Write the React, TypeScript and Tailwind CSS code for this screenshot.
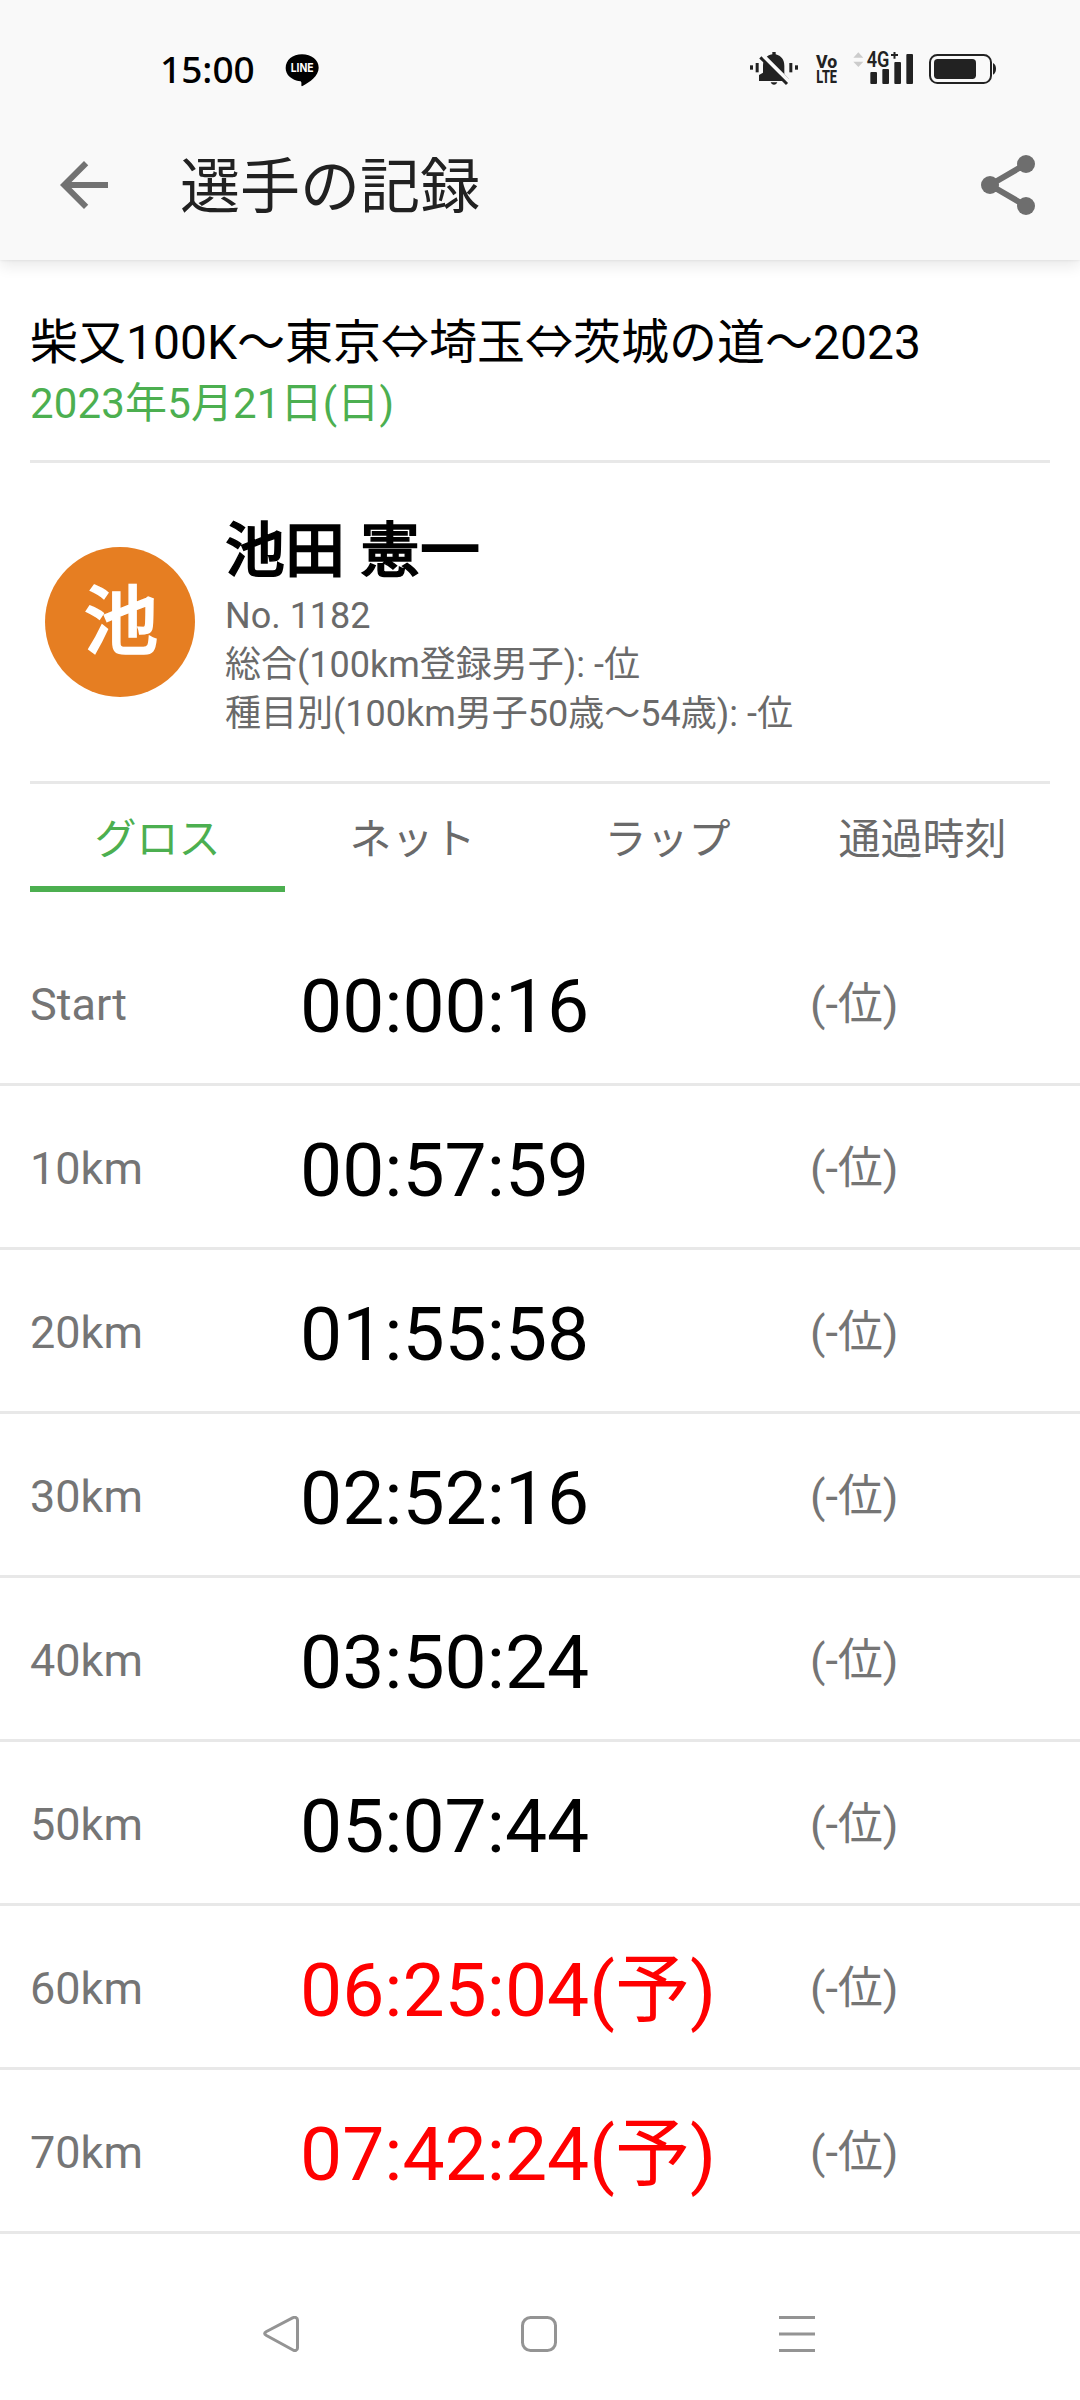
const splits = [
  { point: "Start", time: "00:00:16", estimated: false },
  { point: "10km", time: "00:57:59", estimated: false },
  { point: "20km", time: "01:55:58", estimated: false },
  { point: "30km", time: "02:52:16", estimated: false },
  { point: "40km", time: "03:50:24", estimated: false },
  { point: "50km", time: "05:07:44", estimated: false },
  { point: "60km", time: "06:25:04(予)", estimated: true },
  { point: "70km", time: "07:42:24(予)", estimated: true },
];

const tabs = ["グロス", "ネット", "ラップ", "通過時刻"];

function LineIcon() {
  return (
    <svg className="ml-[31px] h-[34px] w-[34px]" viewBox="0 0 102 102">
      <path
        d="M51 4C23 4 2 21 2 45c0 21 17 36 44 40 3 1 4 3 3 12 0 3 2 3 5 1 20-11 47-29 47-54C101 21 79 4 51 4z"
        fill="#000"
      />
      <text x="17" y="58" fontSize="35" fontWeight="700" fill="#fff" textLength="69" lengthAdjust="spacingAndGlyphs" fontFamily="Inter, sans-serif">
        LINE
      </text>
    </svg>
  );
}

function StatusIcons() {
  return (
    <svg className="h-[60px] w-[270px]" viewBox="0 0 810 180" fill="#222">
      {/* muted bell with vibration marks */}
      <rect x="30" y="76" width="9" height="13" />
      <rect x="47" y="69" width="9" height="28" />
      <rect x="148" y="69" width="9" height="28" />
      <rect x="165" y="76" width="9" height="13" />
      <path d="M97 36h10v7c17 4 26 17 26 34v25l14 15v6H57v-18l12-7V77c0-18 10-31 28-34z" />
      <path d="M92 127h20c-2 5-5 7-10 7s-8-2-10-7z" />
      <path d="M66 44L148 126" stroke="#f9f9f9" strokeWidth="12" />
      <path d="M61 52L141 132" stroke="#222" strokeWidth="9" />
      {/* VoLTE */}
      <g fontFamily="Roboto, sans-serif" fontSize="57" fontWeight="800">
        <text transform="translate(228 83) scale(0.93 1)">Vo</text>
        <text transform="translate(229 130) scale(0.67 1)">LTE</text>
      </g>
      {/* data activity */}
      <path d="M340 53L355 37L370 53zM340 65L355 81L370 65z" fill="#ccc" />
      <text transform="translate(380 82) scale(0.85 1)" fontSize="64" fontWeight="600" fontFamily="Roboto, sans-serif">
        4G
      </text>
      <path d="M453 45h21M463.500 36v20" stroke="#222" strokeWidth="6" />
      <rect x="391" y="96" width="20" height="36" rx="3" />
      <rect x="427" y="87" width="20" height="45" rx="3" />
      <rect x="463" y="66" width="20" height="66" rx="3" />
      <rect x="499" y="42" width="20" height="90" rx="3" />
      {/* battery */}
      <rect x="570" y="45" width="183" height="84" rx="22" fill="none" stroke="#222" strokeWidth="6" />
      <rect x="582" y="57" width="126" height="60" rx="11" />
      <path d="M759 69c12 5 12 30 0 35z" />
    </svg>
  );
}

export default function App() {
  return (
    <div className="flex h-[2400px] w-[1080px] flex-col overflow-hidden bg-white font-['Roboto','Noto_Sans_CJK_JP',sans-serif] text-black">
      <header className="h-[260px] shrink-0 bg-[#f9f9f9] shadow-[0_0_3px_rgba(0,0,0,0.1),0_6px_14px_rgba(0,0,0,0.09)]">
        <div className="flex h-[140px] items-center pl-[160px] pr-[70px]">
          <span className="-mt-[3px] w-[94px] whitespace-nowrap font-['Noto_Sans',sans-serif] text-[37px] font-medium leading-[60px]">15:00</span>
          <LineIcon />
          <div className="ml-auto">
            <StatusIcons />
          </div>
        </div>
        <div className="flex h-[90px] items-center pl-12 pr-9">
          <svg className="size-[72px]" viewBox="0 0 24 24" fill="#727272">
            <path d="M20 11H7.830l5.590-5.590L12 4l-8 8 8 8 1.410-1.410L7.830 13H20v-2z" />
          </svg>
          <h1 className="ml-[60px] mt-[5px] text-[60px] leading-[80px] text-[#212121]">選手の記録</h1>
          <svg className="ml-auto size-[72px]" viewBox="0 0 24 24" fill="#6e6e6e">
            <path d="M6 12L18 5M6 12L18 19" stroke="#6e6e6e" strokeWidth="2" />
            <circle cx="6" cy="12" r="3" />
            <circle cx="18" cy="5" r="3" />
            <circle cx="18" cy="19" r="3" />
          </svg>
        </div>
      </header>

      <section className="mx-[30px] h-[203px] shrink-0 border-b-3 border-[#e8e8e8] pt-[52px]">
        <h2 className="text-[48px] leading-[62px]">柴又100K～東京⇔埼玉⇔茨城の道～2023</h2>
        <p className="text-[42px] leading-[60px] tracking-[0.15px] text-[#4caf50]">2023年5月21日(日)</p>
      </section>

      <section className="mx-[30px] flex h-[321px] shrink-0 border-b-3 border-[#e8e8e8]">
        <div className="ml-[15px] mt-[84px] flex size-[150px] items-center justify-center rounded-full bg-[#e67e22] pl-[2px] text-[75px] font-medium leading-none text-white [-webkit-text-stroke:1.4px_white]">
          池
        </div>
        <div className="ml-[30px] pt-[48px]">
          <p className="text-[60px] font-medium leading-[81px] [-webkit-text-stroke:1.4px_black]">池田 憲一</p>
          <div className="text-[36px] leading-[49px] text-[#6a6a6a]">
            <p>No. 1182</p>
            <p>総合(100km登録男子): -位</p>
            <p>種目別(100km男子50歳～54歳): -位</p>
          </div>
        </div>
      </section>

      <nav className="mx-[30px] grid h-[108px] shrink-0 grid-cols-4 text-center text-[42px] leading-[92px] text-[#6a6a6a]">
        {tabs.map((tab, i) => (
          <div key={tab} className={i === 0 ? "border-b-6 border-[#4caf50] pt-[10px] text-[#4caf50]" : "pt-[10px]"}>
            {tab}
          </div>
        ))}
      </nav>

      <main className="mt-[30px] flex-1">
        {splits.map((s) => (
          <div
            key={s.point}
            className="flex h-[164px] items-center border-b-3 border-[#e8e8e8] pl-[30px] pt-[5px] text-[45px] leading-[60px] text-[#757575]"
          >
            <span className="w-[270px]">{s.point}</span>
            <span className={s.estimated ? "w-[510px] pt-[2px] text-[75px] leading-[90px] text-[#ff0000]" : "w-[510px] pt-[2px] text-[75px] leading-[90px] text-black"}>
              {s.time}
            </span>
            <span>(-位)</span>
          </div>
        ))}
      </main>

      <footer className="flex h-[132px] shrink-0 items-center pl-[263px]">
        <svg className="h-9 w-[554px]" viewBox="0 0 554 36" fill="none" stroke="#949494" strokeWidth="3">
          <path d="M3.500 15.500L30 1.700C32 .8 34.500 1.500 34.500 4V32C34.500 34.500 32 35.200 30 34L3.500 19.500C1 18 1 17 3.500 15.500z" />
          <rect x="259.500" y="1.500" width="33" height="33" rx="8" />
          <path d="M516 1.500h36M516 18h36M516 34.500h36" />
        </svg>
      </footer>
    </div>
  );
}
